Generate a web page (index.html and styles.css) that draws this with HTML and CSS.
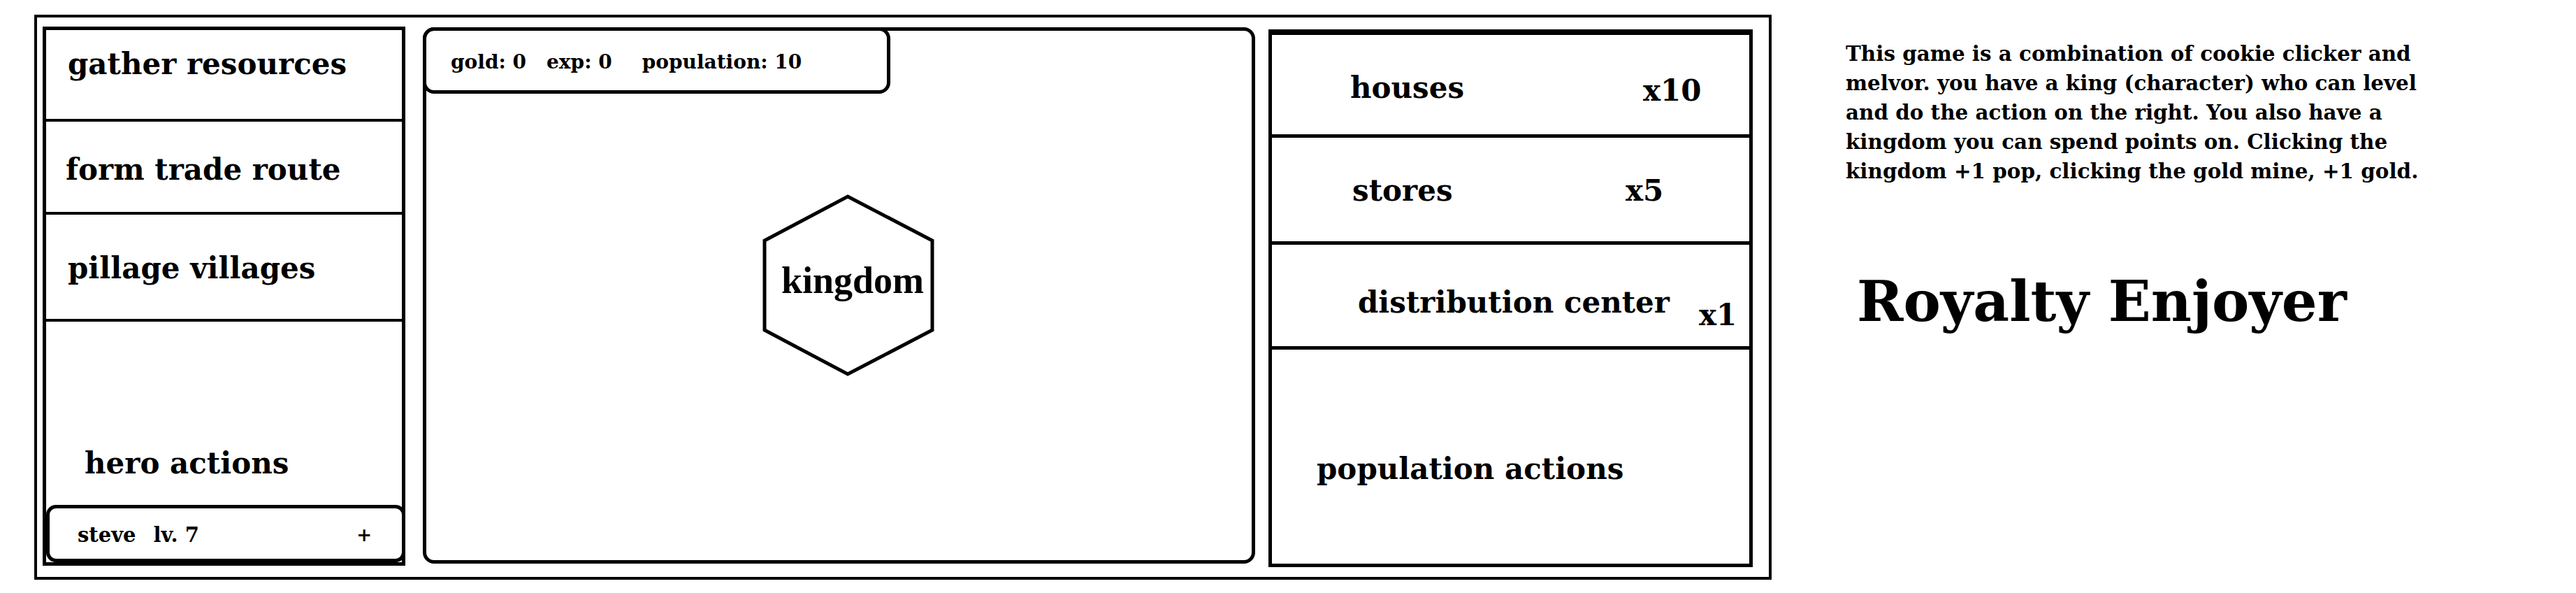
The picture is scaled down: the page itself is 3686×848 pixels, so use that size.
FILE: index.html
```html
<!DOCTYPE html>
<html lang="en">
<head>
  <meta charset="UTF-8">
  <title>Royalty Enjoyer</title>
  <link rel="stylesheet" href="styles.css">
</head>
<body>
  <div class="frame">
    <div class="hero-panel">
      <div class="action action-gather">gather resources</div>
      <div class="action action-trade">form trade route</div>
      <div class="action action-pillage">pillage villages</div>
      <div class="hero-actions">hero actions</div>
      <div class="hero-card">
        <span class="hero-name">steve</span>
        <span class="hero-level">lv. 7</span>
        <span class="hero-plus">+</span>
      </div>
    </div>

    <div class="kingdom-panel">
      <div class="stats">
        <span class="stat">gold: 0</span>
        <span class="stat stat-exp">exp: 0</span>
        <span class="stat">population: 10</span>
      </div>
      <div class="kingdom">
        <svg class="hex" width="250" height="260" viewBox="0 0 250 260">
          <polygon points="124,3 245,66 245,194 124,257 5,194 5,66" fill="none" stroke="#000" stroke-width="5"/>
        </svg>
        <span class="kingdom-label">kingdom</span>
      </div>
    </div>

    <div class="pop-panel">
      <div class="building building-houses">
        <span class="building-name">houses</span>
        <span class="building-count">x10</span>
      </div>
      <div class="building building-stores">
        <span class="building-name">stores</span>
        <span class="building-count">x5</span>
      </div>
      <div class="building building-dist">
        <span class="building-name">distribution center</span>
        <span class="building-count">x1</span>
      </div>
      <div class="pop-actions">population actions</div>
    </div>
  </div>

  <div class="notes">
    <p class="notes-text">This game is a combination of cookie clicker and melvor. you have a king (character) who can level and do the action on the right. You also have a kingdom you can spend points on. Clicking the kingdom +1 pop, clicking the gold mine, +1 gold.</p>
    <h1 class="title">Royalty Enjoyer</h1>
  </div>
</body>
</html>
```

FILE: styles.css
```css
* {
  box-sizing: border-box;
}
body {
  margin: 0;
  background: #fff;
  color: #000;
  font-family: "DejaVu Serif", "Liberation Serif", serif;
  font-weight: bold;
  display: flex;
  align-items: flex-start;
}
.frame {
  margin: 21px 0 0 49px;
  width: 2486px;
  height: 808px;
  border: 4px solid #000;
  padding: 13px 0 0 8px;
  display: flex;
  align-items: flex-start;
}

/* left: hero */
.hero-panel {
  width: 519px;
  height: 771px;
  border: 5px solid #000;
  display: flex;
  flex-direction: column;
}
.action {
  font-size: 42px;
  border-bottom: 4px solid #000;
  padding-left: 31px;
}
.action-gather {
  height: 131px;
  padding-top: 24px;
}
.action-trade {
  height: 133px;
  padding-top: 44px;
  padding-left: 28px;
}
.action-pillage {
  height: 153px;
  padding-top: 52px;
}
.hero-actions {
  flex: 1;
  font-size: 42px;
  padding: 178px 0 0 55px;
}
.hero-card {
  height: 82px;
  border: 5px solid #000;
  border-radius: 14px;
  margin-right: -5px;
  display: flex;
  align-items: center;
  padding: 4px 43px 0 40px;
  font-size: 29px;
}
.hero-level {
  margin-left: 25px;
}
.hero-plus {
  margin-left: auto;
  font-family: "DejaVu Sans", sans-serif;
  font-size: 26px;
}

/* middle: kingdom */
.kingdom-panel {
  margin: 1px 0 0 25px;
  width: 1191px;
  height: 767px;
  border: 5px solid #000;
  border-radius: 16px;
  display: flex;
  flex-direction: column;
  align-items: flex-start;
}
.stats {
  margin: -5px 0 0 -5px;
  width: 669px;
  height: 95px;
  border: 5px solid #000;
  border-radius: 16px;
  padding: 4px 0 0 35px;
  display: flex;
  align-items: center;
  gap: 29px;
  font-size: 28px;
}
.stat-exp {
  margin-right: 14px;
}
.kingdom {
  margin: 144px 0 0 479px;
  display: grid;
  place-items: center;
}
.kingdom > * {
  grid-area: 1 / 1;
}
.hex {
  display: block;
}
.kingdom-label {
  font-family: "Liberation Serif", serif;
  font-size: 54px;
  padding: 0 0 14px 12px;
}

/* right: population */
.pop-panel {
  margin: 4px 0 0 19px;
  width: 693px;
  height: 769px;
  border: 5px solid #000;
  border-top-width: 8px;
  display: flex;
  flex-direction: column;
  font-size: 42px;
}
.building {
  display: flex;
  align-items: flex-start;
  border-bottom: 5px solid #000;
}
.building-houses {
  height: 147px;
  padding: 51px 0 0 112px;
}
.building-houses .building-name {
  width: 419px;
}
.building-houses .building-count {
  margin-top: 4px;
}
.building-stores {
  height: 153px;
  padding: 51px 0 0 115px;
}
.building-stores .building-name {
  width: 391px;
}
.building-dist {
  height: 150px;
  padding: 58px 0 0 123px;
}
.building-dist .building-name {
  width: 488px;
}
.building-dist .building-count {
  margin-top: 18px;
}
.pop-actions {
  flex: 1;
  padding: 146px 0 0 64px;
}

/* notes */
.notes {
  margin: 56px 0 0 106px;
  width: 826px;
}
.notes-text {
  margin: 0;
  font-size: 29.4px;
  line-height: 42px;
}
.title {
  margin: 118px 0 0 16px;
  font-size: 80px;
  font-weight: bold;
}
```
